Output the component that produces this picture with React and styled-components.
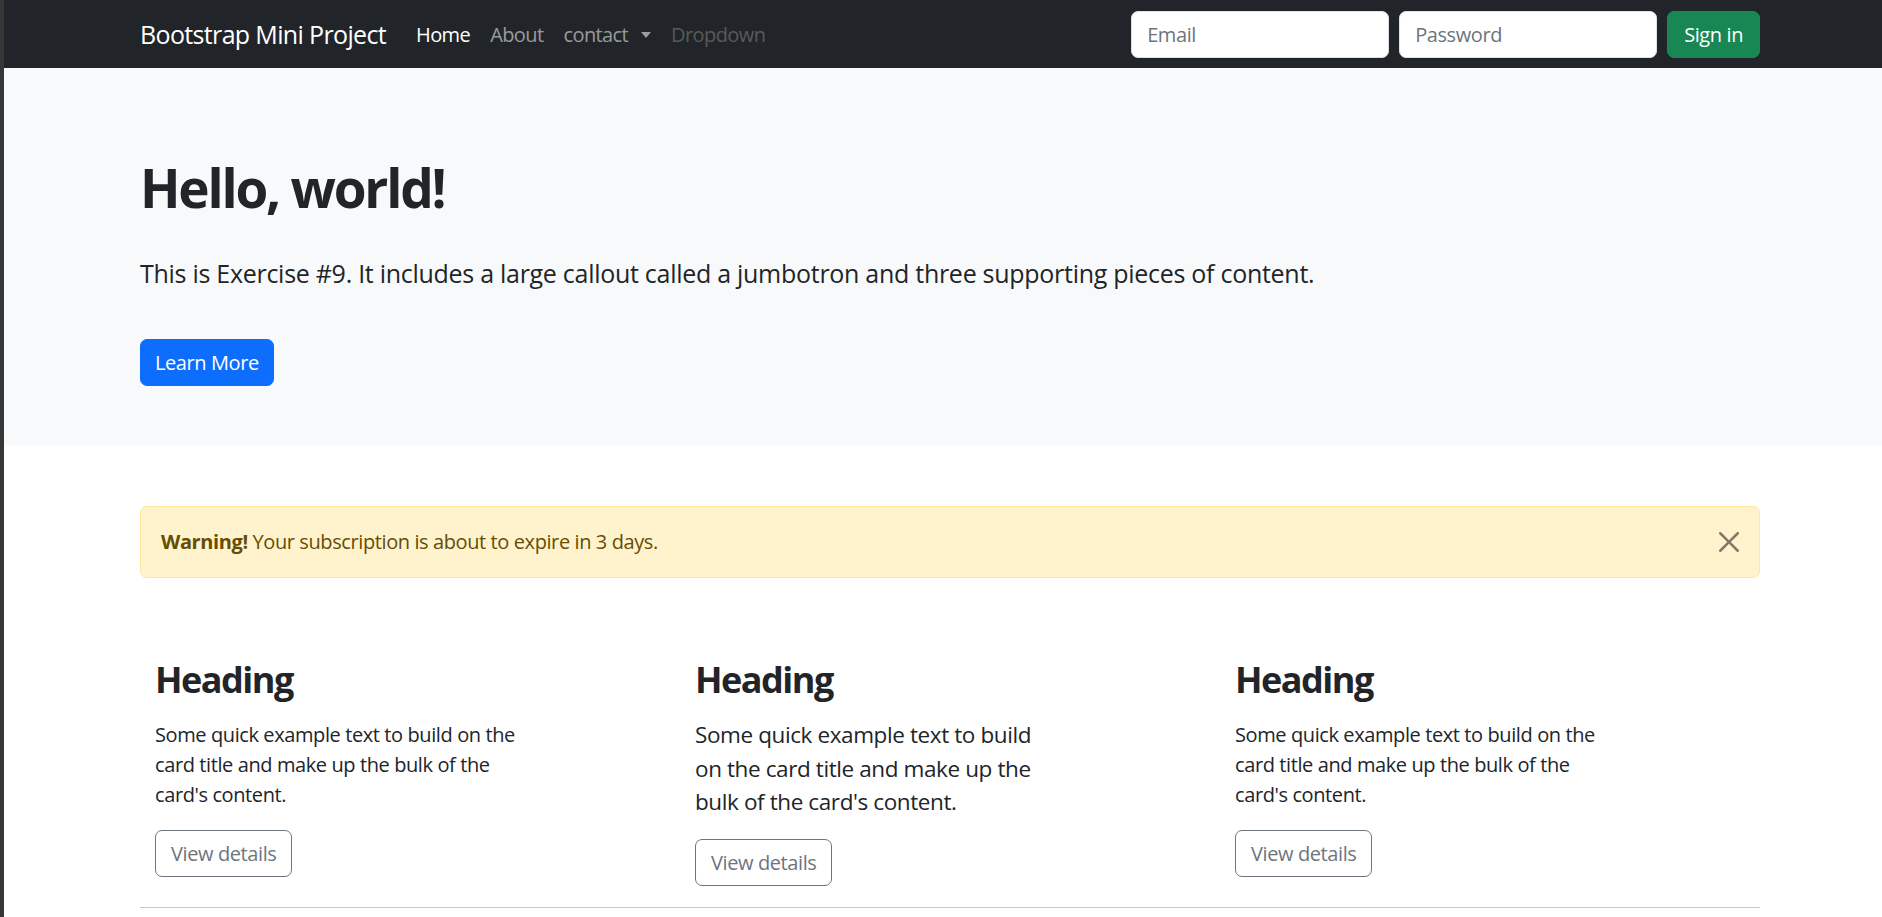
import styled, { createGlobalStyle } from 'styled-components'

const GlobalStyle = createGlobalStyle`
  * {
    box-sizing: border-box;
  }
  html, body {
    margin: 0;
    padding: 0;
  }
  body {
    font-family: 'Open Sans', 'Noto Sans', sans-serif;
    color: #212529;
    background: #fff;
    border-left: 4px solid #363636;
    letter-spacing: -0.4px;
    min-height: 100vh;
  }
`

const Container = styled.div`
  width: 1620px;
  margin-left: 136px;
`

const Navbar = styled.nav`
  background: #212529;
  height: 68px;
`

const NavInner = styled(Container)`
  display: flex;
  align-items: center;
  height: 100%;
`

const Brand = styled.a`
  font-size: 25px;
  letter-spacing: -0.65px;
  color: #fff;
  margin-right: 20px;
  text-decoration: none;
`

const NavList = styled.ul`
  display: flex;
  list-style: none;
  margin: 0;
  padding: 0;
`

const navColors = {
  active: '#fff',
  muted: 'rgba(255, 255, 255, 0.55)',
  disabled: 'rgba(255, 255, 255, 0.25)',
}

const NavLink = styled.a`
  display: flex;
  align-items: center;
  padding: 0 10px;
  font-size: 20px;
  letter-spacing: -0.6px;
  color: ${({ $state }) => navColors[$state]};
  text-decoration: none;
`

const Caret = styled.span`
  display: inline-block;
  margin-left: 13px;
  margin-top: 2px;
  border-top: 6px solid rgba(255, 255, 255, 0.55);
  border-left: 5px solid transparent;
  border-right: 5px solid transparent;
`

const SignForm = styled.form`
  display: flex;
  align-items: center;
  gap: 10px;
  margin-left: auto;
`

const Input = styled.input`
  width: 258px;
  height: 47px;
  padding: 7px 15px;
  border: 1px solid #dee2e6;
  border-radius: 7px;
  font-family: inherit;
  font-size: 20px;
  letter-spacing: -0.4px;
  color: #212529;
  background: #fff;

  &::placeholder {
    color: #6c757d;
  }
`

const variants = {
  success: { bg: '#198754', border: '#198754', color: '#fff' },
  primary: { bg: '#0d6efd', border: '#0d6efd', color: '#fff' },
  outline: { bg: 'transparent', border: '#6c757d', color: '#6c757d' },
}

const Button = styled.button`
  height: 47px;
  padding: 0 ${({ $pad }) => $pad || 15}px;
  border-radius: 7px;
  font-family: inherit;
  font-size: 20px;
  letter-spacing: -0.4px;
  cursor: pointer;
  border: 1px solid ${({ $variant }) => variants[$variant].border};
  background: ${({ $variant }) => variants[$variant].bg};
  color: ${({ $variant }) => variants[$variant].color};
`

const Jumbotron = styled.section`
  background: #f8f9fa;
  padding: 88px 0 59px;
`

const Title = styled.h1`
  margin: 0 0 35.5px;
  font-size: 53px;
  font-weight: 700;
  line-height: 1.2;
  letter-spacing: -2.2px;
`

const Lead = styled.p`
  margin: 0 0 46px;
  font-size: 25px;
  line-height: 1.5;
  letter-spacing: -0.28px;
`

const Alert = styled.div`
  display: flex;
  align-items: center;
  justify-content: space-between;
  margin-top: 61px;
  height: 72px;
  padding: 0 20px;
  background: #fff3cd;
  border: 1px solid #ffe69c;
  border-radius: 7px;
  color: #664d03;
  font-size: 20px;
  line-height: 1.5;
`

const CloseButton = styled.button`
  display: flex;
  padding: 0;
  border: 0;
  background: transparent;
  opacity: 0.5;
  cursor: pointer;
`

const CardRow = styled.div`
  display: grid;
  grid-template-columns: repeat(3, 540px);
  align-items: start;
  padding-top: 80px;
`

const Card = styled.div`
  padding-left: 15px;
  width: 375px;
`

const CardTitle = styled.h2`
  margin: 0;
  font-size: 36px;
  font-weight: 700;
  line-height: 1.2;
  letter-spacing: -1.5px;
`

const CardText = styled.p`
  margin: ${({ $large }) => ($large ? '17px' : '19px')} 0 20px;
  font-size: ${({ $large }) => ($large ? '22.5px' : '20px')};
  line-height: 1.5;
`

const Divider = styled.hr`
  margin: 21px 0 0;
  border: 0;
  border-top: 1px solid #c6c7c8;
`

function CloseIcon() {
  return (
    <svg width="20" height="20" viewBox="0 0 16 16" fill="#000">
      <path d="M.293.293a1 1 0 0 1 1.414 0L8 6.586 14.293.293a1 1 0 1 1 1.414 1.414L9.414 8l6.293 6.293a1 1 0 0 1-1.414 1.414L8 9.414l-6.293 6.293a1 1 0 0 1-1.414-1.414L6.586 8 .293 1.707a1 1 0 0 1 0-1.414z" />
    </svg>
  )
}

const cards = [
  { id: 1, large: false },
  { id: 2, large: true },
  { id: 3, large: false },
]

function App() {
  return (
    <>
      <GlobalStyle />
      <Navbar>
        <NavInner>
          <Brand href="#">Bootstrap Mini Project</Brand>
          <NavList>
            <li>
              <NavLink href="#" $state="active">Home</NavLink>
            </li>
            <li>
              <NavLink href="#" $state="muted">About</NavLink>
            </li>
            <li>
              <NavLink href="#" $state="muted">
                contact
                <Caret />
              </NavLink>
            </li>
            <li>
              <NavLink $state="disabled">Dropdown</NavLink>
            </li>
          </NavList>
          <SignForm onSubmit={(e) => e.preventDefault()}>
            <Input type="text" placeholder="Email" />
            <Input type="password" placeholder="Password" />
            <Button $variant="success" $pad={16} type="submit">Sign in</Button>
          </SignForm>
        </NavInner>
      </Navbar>

      <Jumbotron>
        <Container>
          <Title>Hello, world!</Title>
          <Lead>
            This is Exercise #9. It includes a large callout called a jumbotron and three supporting
            pieces of content.
          </Lead>
          <Button $variant="primary" $pad={14}>Learn More</Button>
        </Container>
      </Jumbotron>

      <Container>
        <Alert>
          <span>
            <strong>Warning!</strong> Your subscription is about to expire in 3 days.
          </span>
          <CloseButton aria-label="Close">
            <CloseIcon />
          </CloseButton>
        </Alert>

        <CardRow>
          {cards.map((card) => (
            <Card key={card.id}>
              <CardTitle>Heading</CardTitle>
              <CardText $large={card.large}>
                Some quick example text to build on the card title and make up the bulk of the
                card's content.
              </CardText>
              <Button $variant="outline">View details</Button>
            </Card>
          ))}
        </CardRow>
        <Divider />
      </Container>
    </>
  )
}

export default App
